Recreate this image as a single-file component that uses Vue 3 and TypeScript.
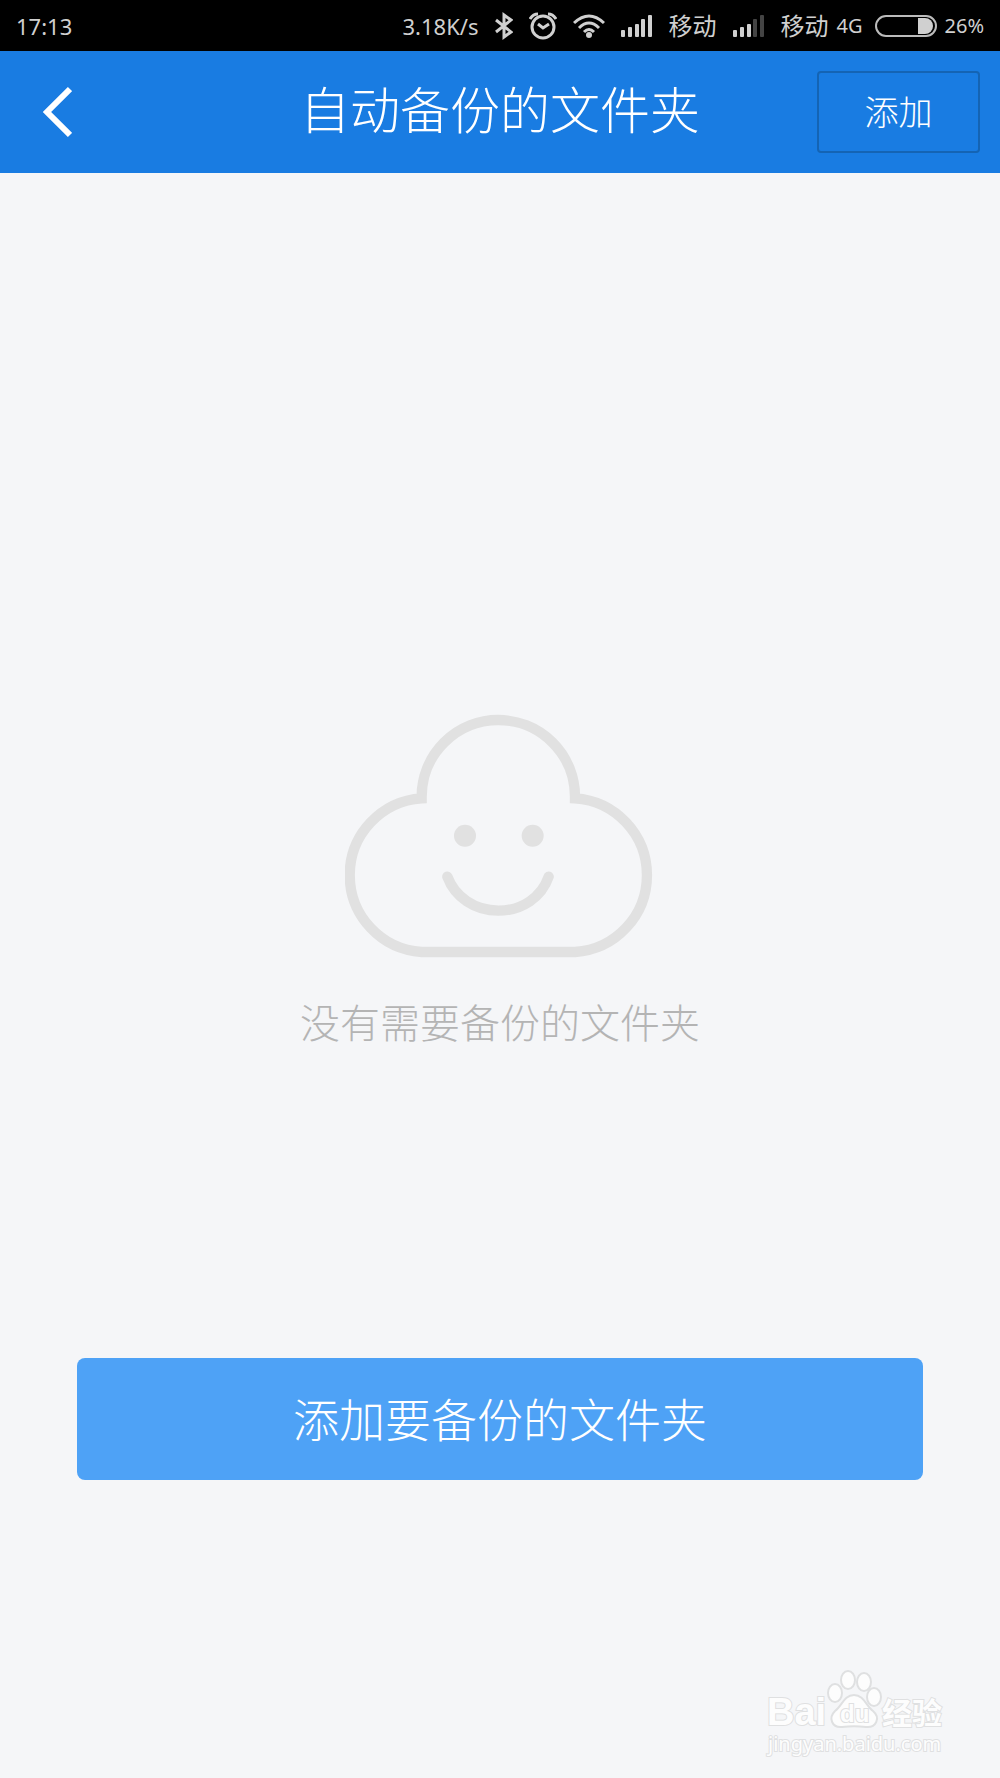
<script setup lang="ts">
interface SignalBar {
  x: number
  height: number
}

const signalBars: SignalBar[] = [
  { x: 0, height: 7 },
  { x: 7, height: 10 },
  { x: 14, height: 13 },
  { x: 20, height: 18 },
  { x: 27, height: 22 },
]

const goBack = (): void => window.history.back()
</script>

<template>
  <div class="screen">
    <div class="status">
      <span class="label">17:13</span>
      <div class="indicators">
        <span class="label">3.18K/s</span>
        <svg width="18" height="28" viewBox="0 0 18 28" fill="none" stroke="#d0d0d0" stroke-width="3">
          <path d="M1 8 L16 20 L9 25 V3 L16 8 L1 20" />
        </svg>
        <svg width="28" height="28" viewBox="0 0 28 28" fill="none" stroke="#d0d0d0" stroke-width="3">
          <circle cx="14" cy="15" r="11" />
          <path d="M9 12 L14 16 L20 12" />
          <path d="M1 7 Q4 2 9 2 M19 2 Q24 2 27 7" />
        </svg>
        <svg width="32" height="28" viewBox="0 0 32 28" fill="none" stroke="#d0d0d0" stroke-width="3">
          <path d="M1 11 Q16 -3 31 11 M6 16 Q16 6 26 16 M11 20 Q16 15 21 20" />
          <circle cx="16" cy="23" r="3" fill="#d0d0d0" stroke="none" />
        </svg>
        <svg width="32" height="24" viewBox="0 0 32 24">
          <rect v-for="bar in signalBars" :key="bar.x" :x="bar.x" :y="23 - bar.height" width="4" :height="bar.height" rx="1" fill="#d0d0d0" />
        </svg>
        <span class="carrier">移动</span>
        <svg width="32" height="24" viewBox="0 0 32 24">
          <rect v-for="(bar, i) in signalBars" :key="bar.x" :x="bar.x" :y="23 - bar.height" width="4" :height="bar.height" rx="1" :fill="i < 3 ? '#d0d0d0' : '#444444'" />
        </svg>
        <div class="network">
          <span class="carrier">移动</span>
          <span class="small">4G</span>
        </div>
        <div class="power">
          <svg width="62" height="24" viewBox="0 0 62 24">
            <rect x="1" y="2" width="60" height="20" rx="10" fill="none" stroke="#bbbbbb" stroke-width="2" />
            <path d="M43 4 H50 A8 8 0 0 1 50 20 H43 Z" fill="#d0d0d0" />
          </svg>
          <span class="small">26%</span>
        </div>
      </div>
    </div>

    <header class="bar">
      <button class="back" type="button" aria-label="返回" @click="goBack">
        <svg width="32" height="54" viewBox="0 0 32 54" fill="none" stroke="#ffffff" stroke-width="6">
          <path d="M30 4 L7 27 L30 50" />
        </svg>
      </button>
      <h1>自动备份的文件夹</h1>
      <button class="add" type="button">添加</button>
    </header>

    <main class="empty">
      <svg width="310" height="245" viewBox="45 40 930 735" fill="none" stroke="#e1e1e1" stroke-width="31">
        <path d="M275 293 V288 A230 230 0 0 1 735 288 V293 A231 231 0 0 1 735 754 H275 A231 231 0 0 1 275 293 Z" />
        <path d="M352 528 C375 590 435 630 505 630 S635 590 656 528" stroke-linecap="round" />
        <circle cx="405" cy="405" r="33" fill="#e1e1e1" stroke="none" />
        <circle cx="608" cy="405" r="33" fill="#e1e1e1" stroke="none" />
      </svg>
      <p>没有需要备份的文件夹</p>
      <button class="primary" type="button">添加要备份的文件夹</button>
    </main>

    <svg class="mark" width="190" height="96" viewBox="0 0 190 96">
      <g fill="#fdfdfd" stroke="#dfe0e1" stroke-width="2">
        <ellipse cx="75" cy="29" rx="7" ry="9" />
        <ellipse cx="88" cy="16" rx="7" ry="9" />
        <ellipse cx="104" cy="18" rx="7" ry="9" />
        <ellipse cx="114" cy="33" rx="7" ry="9" />
        <path d="M94 31 C104 31 106 42 113 47 C121 54 116 64 106 63 C98 62 90 62 82 63 C72 64 68 54 75 47 C82 42 84 31 94 31 Z" />
      </g>
      <g class="mark-text">
        <text class="brand" x="7" y="61">Bai</text>
        <text class="paw" x="80" y="58">du</text>
        <text class="cn" x="122" y="60">经验</text>
        <text class="url" x="8" y="87">jingyan.baidu.com</text>
      </g>
    </svg>
  </div>
</template>

<style>
body {
  margin: 0;
  background: #f5f6f8;
}
</style>

<style scoped>
.screen {
  position: relative;
  min-height: 100vh;
  background: #f5f6f8;
  font-family: "Noto Sans", "Noto Sans CJK SC", sans-serif;
  font-weight: 300;
}

.status {
  display: flex;
  align-items: center;
  justify-content: space-between;
  box-sizing: border-box;
  height: 51px;
  padding: 0 16px;
  background: #000000;
  color: #d0d0d0;
  font-weight: 400;
  white-space: nowrap;
}

.indicators {
  display: flex;
  align-items: center;
  gap: 16px;
}

.network,
.power {
  display: flex;
  align-items: center;
  gap: 8px;
}

.power {
  margin-left: -4px;
}

.label {
  font-size: 22px;
  line-height: 48px;
}

.carrier {
  font-size: 24px;
  line-height: 48px;
}

.small {
  font-size: 20px;
  line-height: 48px;
}

.bar {
  display: grid;
  grid-template-columns: 1fr auto 1fr;
  align-items: center;
  box-sizing: border-box;
  height: 122px;
  padding: 0 20px;
  background: #197ce2;
  color: #ffffff;
}

button {
  margin: 0;
  font-family: inherit;
  font-weight: inherit;
  color: #ffffff;
  cursor: pointer;
}

.back {
  justify-self: start;
  display: flex;
  padding: 0 20px;
  border: 0;
  background: none;
}

h1 {
  margin: 0;
  padding-bottom: 4px;
  font-size: 50px;
  line-height: 64px;
  font-weight: 300;
  white-space: nowrap;
}

.add {
  justify-self: end;
  box-sizing: border-box;
  width: 163px;
  height: 82px;
  padding: 0 0 4px;
  border: 2px solid #1464b4;
  border-radius: 4px;
  background: none;
  font-size: 34px;
}

.empty {
  display: flex;
  flex-direction: column;
  align-items: center;
  padding: 541px 77px 120px;
}

.empty p {
  margin: 32px 0 0;
  font-size: 40px;
  line-height: 64px;
  color: #b4b4b4;
}

.primary {
  box-sizing: border-box;
  width: 100%;
  height: 122px;
  margin-top: 303px;
  padding: 0 0 4px;
  border: 0;
  border-radius: 8px;
  background: #4ea2f6;
  font-size: 46px;
}

.mark {
  position: absolute;
  right: 50px;
  bottom: 18px;
}

.mark-text {
  fill: #fdfdfd;
  stroke: #dfe0e1;
  stroke-width: 2px;
  paint-order: stroke;
}

.brand {
  font: 700 38px "Liberation Sans", sans-serif;
}

.paw {
  font: 700 24px "Liberation Sans", sans-serif;
}

.cn {
  font: 700 30px "Noto Sans CJK SC", sans-serif;
}

.url {
  font: 400 20px "Noto Sans", sans-serif;
}
</style>
